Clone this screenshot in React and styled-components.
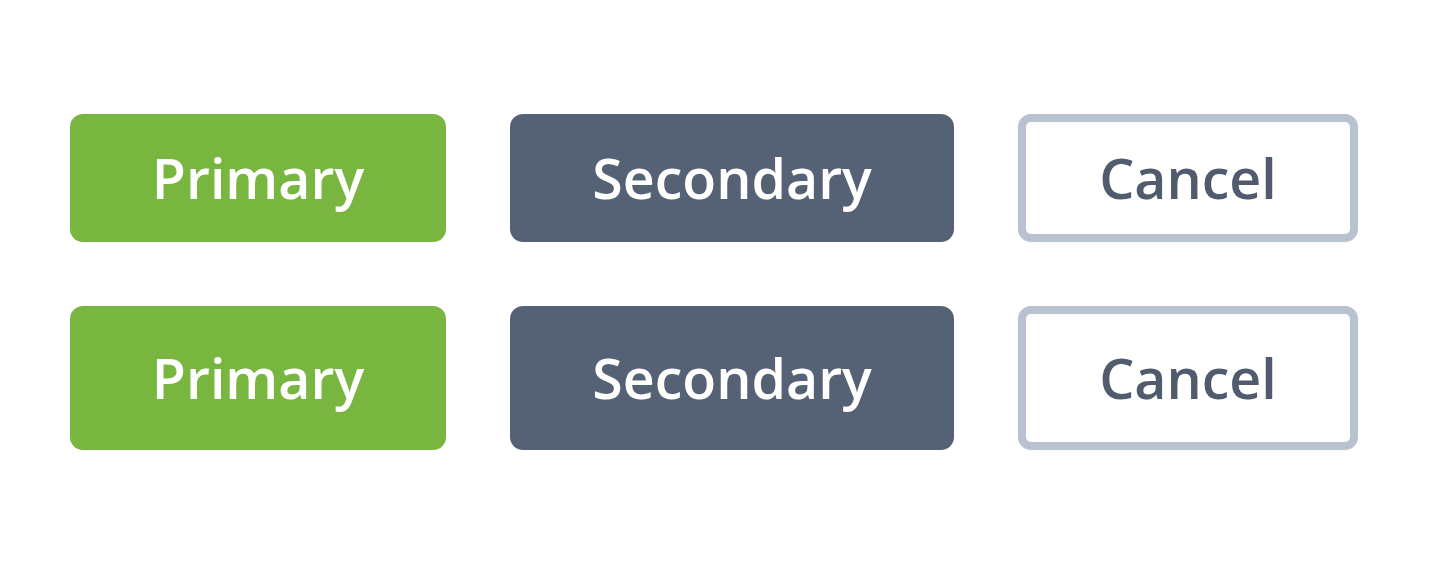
import React from "react"
import styled, { createGlobalStyle, css } from "styled-components"

const GlobalStyle = createGlobalStyle`
  html, body {
    margin: 0;
    padding: 0;
    background: #ffffff;
  }
  body {
    font-family: "Open Sans", "Noto Sans", "Liberation Sans", sans-serif;
  }
`

const Page = styled.main`
  display: flex;
  flex-direction: column;
  gap: 64px;
  padding: 114px 70px;
`

const Row = styled.div`
  display: flex;
  gap: 64px;
`

const variants = {
  primary: css`
    background: #78b63f;
    color: #ffffff;
    border: none;
  `,
  secondary: css`
    background: #556275;
    color: #ffffff;
    border: none;
  `,
  cancel: css`
    background: #ffffff;
    color: #505c6d;
    border: 8px solid #b8c2d0;
  `,
}

const Button = styled.button`
  box-sizing: border-box;
  display: flex;
  align-items: center;
  justify-content: center;
  width: ${(p) => p.$width}px;
  height: ${(p) => (p.$large ? 144 : 128)}px;
  padding: 0;
  border-radius: 13px;
  font-family: inherit;
  font-size: 55.5px;
  font-weight: 600;
  line-height: 1;
  cursor: pointer;
  ${(p) => variants[p.$variant]}
`

const buttons = [
  { label: "Primary", variant: "primary", width: 376 },
  { label: "Secondary", variant: "secondary", width: 444 },
  { label: "Cancel", variant: "cancel", width: 340 },
]

const ButtonRow = ({ large }) => (
  <Row>
    {buttons.map((b) => (
      <Button key={b.label} $variant={b.variant} $width={b.width} $large={large}>
        {b.label}
      </Button>
    ))}
  </Row>
)

const App = () => {
  return (
    <>
      <GlobalStyle />
      <Page>
        <ButtonRow />
        <ButtonRow large />
      </Page>
    </>
  )
}

export default App
